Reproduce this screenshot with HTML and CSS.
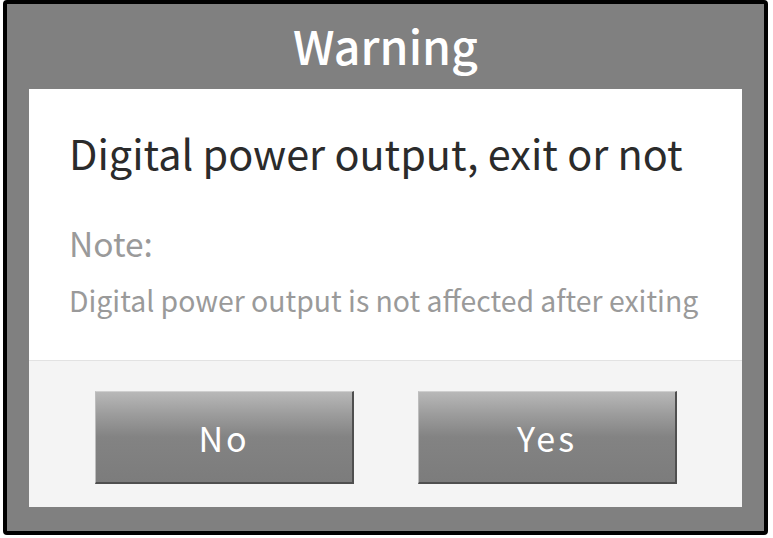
FILE: index.html
```html
<!DOCTYPE html>
<html>
<head>
<meta charset="utf-8">
<link rel="stylesheet" href="styles.css">
</head>
<body>
<div class="frame">
  <div class="header">Warning</div>
  <div class="panel">
    <div class="content">
      <div class="title">Digital power output, exit or not</div>
      <div class="note">Note:</div>
      <div class="desc">Digital power output is not affected after exiting</div>
    </div>
    <div class="actions">
      <button class="btn">No</button>
      <button class="btn">Yes</button>
    </div>
  </div>
</div>
</body>
</html>
```

FILE: styles.css
```css
html, body {
  margin: 0;
  padding: 0;
  background: #ffffff;
}
body {
  font-family: "Noto Sans CJK SC", "Noto Sans", sans-serif;
}
.frame {
  box-sizing: border-box;
  margin-left: 3px;
  width: 765px;
  height: 535px;
  border: 4px solid #000;
  border-radius: 4px;
  background: #808080;
  padding: 0 22px 24px 22px;
  display: flex;
  flex-direction: column;
}
.header {
  height: 85px;
  display: flex;
  align-items: center;
  justify-content: center;
  color: #ffffff;
  font-size: 46.5px;
  font-weight: 500;
  padding-bottom: 5px;
  box-sizing: border-box;
}
.panel {
  flex: 1;
  display: flex;
  flex-direction: column;
  background: #f4f4f4;
}
.content {
  height: 272px;
  background: #ffffff;
  border-bottom: 1px solid #e2e2e2;
  padding: 38px 0 0 40px;
  box-sizing: border-box;
}
.title {
  color: #2b2b2b;
  font-size: 41.4px;
  line-height: 50px;
}
.note {
  color: #9a9a9a;
  font-size: 33.5px;
  line-height: 40px;
  margin-top: 46px;
}
.desc {
  color: #9a9a9a;
  font-size: 28.4px;
  line-height: 36px;
  margin-top: 19px;
}
.actions {
  flex: 1;
  display: flex;
  justify-content: space-between;
  padding: 30px 65px 0 66px;
}
.btn {
  width: 259px;
  height: 93px;
  box-sizing: border-box;
  border: none;
  border-top: 1px solid #cfcfcf;
  border-left: 1px solid #bdbdbd;
  border-right: 2px solid #4f4f4f;
  border-bottom: 2px solid #4f4f4f;
  background: linear-gradient(to bottom, #b8b8b8 0%, #9c9c9c 25%, #838383 50%, #7c7c7c 100%);
  color: #ffffff;
  font-family: "Noto Sans CJK SC", "Noto Sans", sans-serif;
  font-size: 34px;
  letter-spacing: 3px;
  padding: 0;
}
```
